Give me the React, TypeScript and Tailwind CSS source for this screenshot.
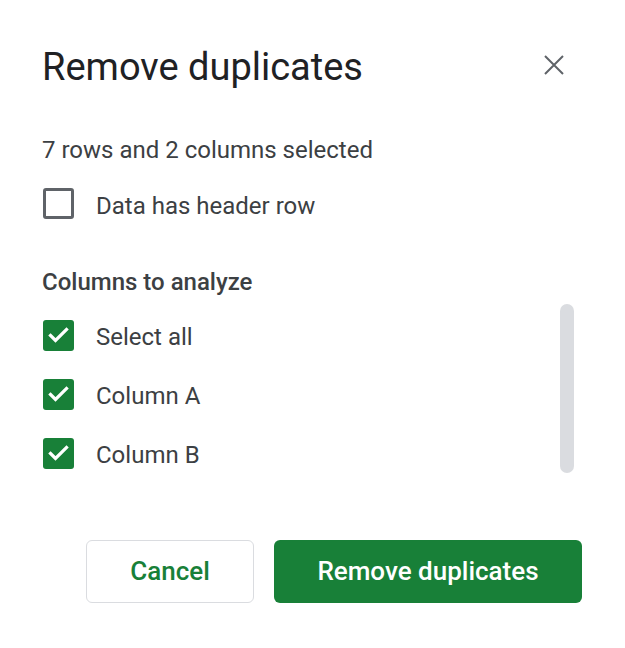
import { useState } from "react"

type Column = { id: string; label: string }

const columns: Column[] = [
  { id: "all", label: "Select all" },
  { id: "a", label: "Column A" },
  { id: "b", label: "Column B" },
]

function CheckMark() {
  return (
    <svg width="31" height="31" viewBox="0 0 31 31" fill="none">
      <path d="M7.5 15.5l5 5 11-11" stroke="white" strokeWidth="3.2" strokeLinecap="square" />
    </svg>
  )
}

function Checkbox({ checked, onToggle }: { checked: boolean; onToggle: () => void }) {
  if (checked) {
    return (
      <button onClick={onToggle} className="w-[31px] h-[31px] rounded-[3px] bg-[#188038] flex items-center justify-center shrink-0">
        <CheckMark />
      </button>
    )
  }
  return (
    <button
      onClick={onToggle}
      className="w-[31px] h-[31px] rounded-[3px] border-[3px] border-[#5f6368] bg-white shrink-0"
    />
  )
}

export default function App() {
  const [hasHeader, setHasHeader] = useState(false)
  const [selected, setSelected] = useState<Record<string, boolean>>({ all: true, a: true, b: true })

  return (
    <div className="w-[625px] h-[648px] bg-white font-['Roboto',sans-serif] text-[#3c4043]">
      <div className="pl-[42px] pr-[61px] pt-[45px]">
        {/* Header */}
        <div className="flex items-center justify-between h-[44px]">
          <h1 className="text-[38px] leading-[44px] text-[#202124]">Remove duplicates</h1>
          <button className="mt-[-4px]">
            <svg width="20" height="20" viewBox="0 0 20 20">
              <path d="M1 1l18 18M19 1L1 19" stroke="#5f6368" strokeWidth="2" />
            </svg>
          </button>
        </div>

        <p className="mt-[47px] text-[24px] leading-[28px]">7 rows and 2 columns selected</p>

        <label className="mt-[24px] flex items-center h-[31px] gap-[22px] pl-[1px]">
          <Checkbox checked={hasHeader} onToggle={() => setHasHeader(!hasHeader)} />
          <span className="mt-[5px] text-[24px] leading-[28px]">Data has header row</span>
        </label>

        <h2 className="mt-[49px] text-[24px] leading-[28px] font-medium">Columns to analyze</h2>
      </div>

      {/* Scrollable column list */}
      <div className="mt-[8px] flex items-start justify-between pl-[43px] pr-[51px]">
        <div className="flex flex-col gap-[28px] pt-[16px]">
          {columns.map((col) => (
            <div key={col.id} className="flex items-center h-[31px] gap-[22px]">
              <Checkbox
                checked={selected[col.id]}
                onToggle={() => setSelected({ ...selected, [col.id]: !selected[col.id] })}
              />
              <span className="mt-[2px] text-[24px] leading-[28px]">{col.label}</span>
            </div>
          ))}
        </div>
        <div className="w-[14px] h-[169px] rounded-full bg-[#dadce0]" />
      </div>

      {/* Actions */}
      <div className="mt-[67px] flex justify-end gap-[20px] pr-[43px]">
        <button className="w-[168px] h-[63px] rounded-[6px] border border-[#dadce0] bg-white text-[26px] font-medium text-[#188038]">
          Cancel
        </button>
        <button className="w-[308px] h-[63px] rounded-[6px] bg-[#188038] text-[26px] font-medium text-white">
          Remove duplicates
        </button>
      </div>
    </div>
  )
}
